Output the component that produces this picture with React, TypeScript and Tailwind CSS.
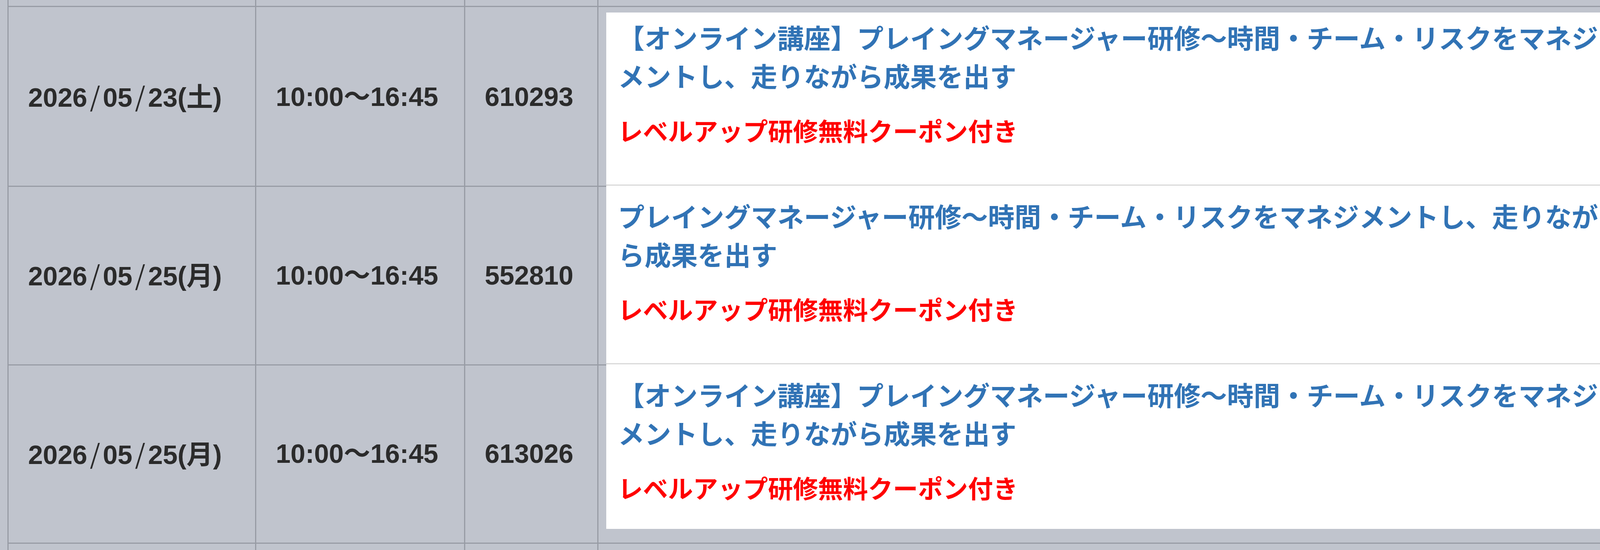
const rows = [
  {
    date: ['2026', '05', '23(土)'],
    time: '10:00～16:45',
    code: '610293',
    title: '【オンライン講座】プレイングマネージャー研修～時間・チーム・リスクをマネジメントし、走りながら成果を出す',
  },
  {
    date: ['2026', '05', '25(月)'],
    time: '10:00～16:45',
    code: '552810',
    title: 'プレイングマネージャー研修～時間・チーム・リスクをマネジメントし、走りながら成果を出す',
  },
  {
    date: ['2026', '05', '25(月)'],
    time: '10:00～16:45',
    code: '613026',
    title: '【オンライン講座】プレイングマネージャー研修～時間・チーム・リスクをマネジメントし、走りながら成果を出す',
  },
];

const cell = 'border-r-[3px] border-b-[3px] border-[#989ca5]';
const textCell = `${cell} flex items-center pl-[50px] text-[68px] leading-[98px] font-bold text-[#2b2b2b] font-['Liberation_Sans','Noto_Sans_CJK_JP',sans-serif]`;

const Stub = ({ last }: { last?: boolean }) => (
  <div className={`grid grid-cols-[634px_535px_341px_2658px] ${last ? 'h-[16px]' : 'h-[18px]'}`}>
    {[0, 1, 2, 3].map((i) => (
      <div key={i} className={last ? 'border-r-[3px] border-[#989ca5]' : cell} />
    ))}
  </div>
);

const App = () => {
  return (
    <div className="w-[4206px] h-[1407px] overflow-hidden bg-[#c0c4cd]">
      <div className="ml-[19px] w-[4171px] border-l-[3px] border-[#989ca5]">
        <Stub />
        {rows.map((r, i) => (
          <div
            key={r.code}
            className={`grid grid-cols-[634px_535px_341px_2658px] ${i === 2 ? 'h-[459px]' : 'h-[457px]'}`}
          >
            <div className={textCell}>
              <span>
                {r.date[0]}
                <span className="inline-block w-[40px] text-center font-['Noto_Sans_CJK_JP'] font-normal">/</span>
                {r.date[1]}
                <span className="inline-block w-[40px] text-center font-['Noto_Sans_CJK_JP'] font-normal">/</span>
                {r.date[2]}
              </span>
            </div>
            <div className={textCell}>{r.time}</div>
            <div className={textCell}>{r.code}</div>
            <div className={`${cell} pl-[20px] pr-[32px] ${i === 0 ? 'pt-[14px]' : ''}`}>
              <div
                className={`relative bg-white px-[30px] font-bold font-['Noto_Sans_CJK_JP',sans-serif] ${
                  i === 0
                    ? 'h-[443px] pt-[14px] border-b-[3px] border-[#d9d9d9]'
                    : i === 1
                      ? 'h-[457px] pt-[28px] border-b-[3px] border-[#d9d9d9]'
                      : 'h-[421px] pt-[28px]'
                }`}
              >
                <p className="text-[68px] leading-[98px] text-[#3173b5]">{r.title}</p>
                <p className="mt-[44px] text-[64px] leading-[92px] text-[#ff0000]">レベルアップ研修無料クーポン付き</p>
              </div>
            </div>
          </div>
        ))}
        <Stub last />
      </div>
    </div>
  );
};

export default App;
